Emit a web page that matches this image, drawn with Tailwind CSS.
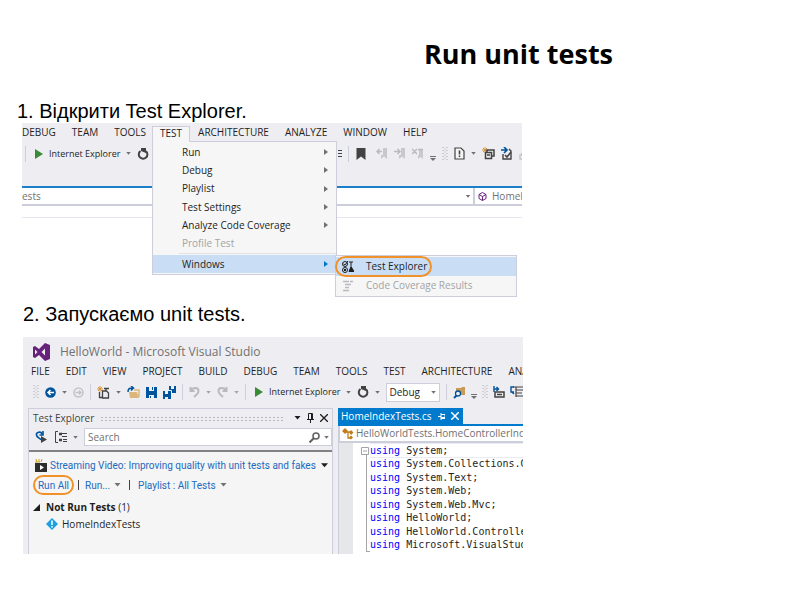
<!DOCTYPE html>
<html lang="uk">
<head>
    <meta charset="UTF-8">
    <meta name="viewport" content="width=device-width, initial-scale=1.0">
    <title>Run unit tests</title>
    <script src="https://cdn.jsdelivr.net/npm/@tailwindcss/browser@4"></script>
</head>
<body class="bg-white text-black font-['Liberation_Sans',sans-serif]">

    <!-- Shared icons -->
    <svg class="hidden">
        <symbol id="caret" viewBox="0 0 6 4"><path d="M0 0h6L3 3.5z" fill="currentColor"/></symbol>
        <symbol id="play" viewBox="0 0 8 10"><path d="M0 0l8 5-8 5z" fill="#388a34"/></symbol>
        <symbol id="arrow" viewBox="0 0 4 6"><path d="M0 0l4 3-4 3z" fill="currentColor"/></symbol>
        <symbol id="refresh" viewBox="0 0 12 12"><path d="M3.500 3A4.300 4.300 0 1 0 9 3.300" fill="none" stroke="#424242" stroke-width="2"/><path d="M4 0h5v5L4 3z" fill="#424242"/></symbol>
        <symbol id="grip" viewBox="0 0 6 14"><path d="M1 0v14M5 0v14" stroke="#a9a9b3" stroke-dasharray="1 2"/><path d="M3 1.5v12" stroke="#a9a9b3" stroke-dasharray="1 2"/></symbol>
        <symbol id="overflow" viewBox="0 0 6 14"><path d="M0 9.5h6" stroke="#717171"/><path d="M0 11h6l-3 3z" fill="#717171"/></symbol>
        <symbol id="undo" viewBox="0 0 11 12"><path d="M1.5 1v4h4M2 4.5C4 1 9.500 1 9.500 5c0 2.500-2 4-4.500 6" fill="none" stroke="#b9b9bf" stroke-width="2"/></symbol>
    </svg>

    <header class="pt-9 pl-[424px]">
        <h1 class="text-[27px] leading-9 font-bold whitespace-nowrap font-['Open_Sans',sans-serif]">Run unit tests</h1>
    </header>

    <main class="pt-7">
        <h2 class="pl-[17px] text-[20px] leading-[23px]">1. Відкрити Test Explorer.</h2>

        <!-- TEST menu opened -->
        <section class="relative ml-[22px] w-5/8 pb-[78px] text-[10px] text-[#1e1e1e] font-['Open_Sans',sans-serif]">
            <div class="overflow-hidden">
                <div class="bg-[#eeeef2] h-[63px]">
                    <nav class="flex h-[19px] items-center gap-4 whitespace-nowrap">
                        <button>DEBUG</button>
                        <button>TEAM</button>
                        <button>TOOLS</button>
                        <button class="relative z-10 -mr-2 -ml-[10px] flex h-4 items-center self-end border border-b-0 border-[#cccedb] bg-[#f6f6f6] px-[7px] pb-[2px]">TEST</button>
                        <button>ARCHITECTURE</button>
                        <button>ANALYZE</button>
                        <button>WINDOW</button>
                        <button>HELP</button>
                    </nav>
                    <div class="flex h-[23px] items-center whitespace-nowrap">
                        <div class="flex w-[316px] shrink-0 items-center gap-[6px] pl-[3px]">
                            <span class="h-4 w-px bg-[#cccedb]"></span>
                            <button class="flex items-center gap-[6px] pl-[3px] text-[9px]">
                                <svg class="w-[8px] h-[10px]"><use href="#play"/></svg>
                                Internet Explorer
                            </button>
                            <svg class="w-[5px] h-[3px] text-[#717171]"><use href="#caret"/></svg>
                            <svg class="size-3"><use href="#refresh"/></svg>
                        </div>
                        <div class="flex shrink-0 items-center gap-[6px]">
                            <svg class="w-1 h-[10px]"><path d="M0 1.500h4M0 4.500h4M0 7.500h4" stroke="#424242"/></svg>
                            <span class="h-4 w-px bg-[#cccedb]"></span>
                            <svg class="ml-px w-[10px] h-[12px]"><path d="M0.500 0h9v12L5 8.500 0.500 12z" fill="#424242"/></svg>
                            <svg class="ml-1 size-3"><path d="M7 0h4v11L8 8.500 5 11V7h2z" fill="#c8c8ce"/><path d="M6 3.500H1M3.500 1L1 3.500 3.500 6" fill="none" stroke="#b9b9bf" stroke-width="1.500"/></svg>
                            <svg class="size-3"><path d="M7 0h4v11L8 8.500 5 11V7h2z" fill="#c8c8ce"/><path d="M0 3.500h6M3.500 1L6 3.500 3.500 6" fill="none" stroke="#b9b9bf" stroke-width="1.500"/></svg>
                            <svg class="size-3"><path d="M7 2h4v9L8.500 9 6 11V7h1z" fill="#c8c8ce"/><path d="M0 1l5 5M5 1L0 6M6 1.500h5" fill="none" stroke="#b9b9bf" stroke-width="1.500"/></svg>
                            <svg class="w-[6px] h-[14px]"><use href="#overflow"/></svg>
                            <svg class="w-[6px] h-[14px]"><use href="#grip"/></svg>
                            <svg class="w-[11px] h-[13px]"><path d="M1 1h6l3 3v8H1z" fill="#f6f6f6" stroke="#424242" stroke-width="1.200"/><path d="M5.500 3.500v4M5.500 8.500v1.500" stroke="#424242" stroke-width="1.600"/></svg>
                            <svg class="w-[5px] h-[3px] text-[#717171]"><use href="#caret"/></svg>
                            <svg class="w-[13px] h-[13px]"><path d="M3 0v6M0 3h6M1 1l4 4M5 1L1 5" stroke="#d8963a"/><path d="M5 5V3h7v6h-2M3.500 5.500h6v6h-6zM5 8h3" fill="none" stroke="#424242" stroke-width="1.500"/></svg>
                            <svg class="w-[12px] h-[13px]"><path d="M2 7v5h8V4L8 2" fill="none" stroke="#424242" stroke-width="1.400"/><path d="M4 8l2 2 4-5" fill="none" stroke="#424242" stroke-width="1.600"/><path d="M0 3h5M3 0l3 3-3 3" fill="none" stroke="#00539c" stroke-width="1.700"/></svg>
                            <svg class="w-[12px] h-[13px]"><path d="M6 1v3h5M6 4L2 7M1 8h4v4H1zM7 8h4v4H7z" fill="none" stroke="#c3c3c9" stroke-width="1.400"/></svg>
                        </div>
                    </div>
                </div>
                <div class="flex h-5 items-center border-t-2 border-b-2 border-t-[#1c7fc9] border-b-[#cccedb] text-[#717171]">
                    <span class="w-[443px] shrink-0">ests</span>
                    <svg class="w-[6px] h-[3px] shrink-0"><use href="#caret"/></svg>
                    <span class="ml-[2px] h-4 w-[2px] shrink-0 bg-[#cccedb]"></span>
                    <svg class="mx-[3px] size-[9px] shrink-0" fill="none" stroke="#68217a"><path d="M4.500 .5l3.500 2v4l-3.500 2-3.500-2v-4zM1 2.500l3.500 2 3.500-2M4.500 4.500v4"/></svg>
                    <span class="ml-[2px]">HomeI</span>
                </div>
                <div class="h-3 border-b border-[#e6e7ee]"></div>
            </div>

            <!-- Drop-down menu -->
            <div class="absolute left-[130px] top-[18px] w-[185px] border border-[#cccedb] bg-[#f6f6f6] pt-px pb-px">
                <div class="grid h-[110px] auto-rows-fr pl-[29px] pr-2">
                    <button class="flex items-center justify-between">Run<svg class="w-1 h-[6px] text-[#717171]"><use href="#arrow"/></svg></button>
                    <button class="flex items-center justify-between">Debug<svg class="w-1 h-[6px] text-[#717171]"><use href="#arrow"/></svg></button>
                    <button class="flex items-center justify-between">Playlist<svg class="w-1 h-[6px] text-[#717171]"><use href="#arrow"/></svg></button>
                    <button class="flex items-center justify-between">Test Settings<svg class="w-1 h-[6px] text-[#717171]"><use href="#arrow"/></svg></button>
                    <button class="flex items-center justify-between">Analyze Code Coverage<svg class="w-1 h-[6px] text-[#717171]"><use href="#arrow"/></svg></button>
                    <button class="flex items-center text-[#a2a4a5]" disabled>Profile Test</button>
                </div>
                <div class="ml-[26px] border-t border-[#e0e3e6]"></div>
                <button class="mt-px flex h-[18px] w-full items-center justify-between bg-[#c9def5] pl-[29px] pr-2">Windows<svg class="w-1 h-[6px] text-[#007acc]"><use href="#arrow"/></svg></button>
            </div>
            <div class="absolute left-[313px] top-[132px] w-[182px] border border-[#cccedb] bg-[#f6f6f6] py-px">
                <button class="flex h-[19px] w-full items-center gap-3 bg-[#c9def5] pl-[6px]">
                    <svg class="w-3 h-3" fill="none" stroke="#1e1e1e"><circle cx="3" cy="3" r="2.500"/><circle cx="3" cy="9" r="2.500"/><path d="M1.500 3l1.500 1 3-4M2 8l2 2M4 8l-2 2M7 1h4M9 1v4"/><path d="M7 10.500l2-5 3 5z" fill="#1e1e1e"/></svg>
                    Test Explorer
                </button>
                <button class="flex h-[19px] w-full items-center gap-3 pl-[6px] text-[#a2a4a5]" disabled>
                    <svg class="w-3 h-3" fill="none" stroke="#b9b9bf" stroke-width="1.500"><path d="M1 1.500h6M8 1.500h3M3 4.500h6M3 7.500h4M1 10.500h6"/></svg>
                    Code Coverage Results
                </button>
                <span class="absolute -left-px top-0 h-[21px] w-[97px] rounded-full border-2 border-[#f0912a]"></span>
            </div>
        </section>

        <h2 class="pt-[7px] pl-[23px] text-[20px] leading-[23px]">2. Запускаємо unit tests.</h2>

        <!-- Test Explorer window -->
        <section class="mt-[11px] ml-[23px] w-5/8 overflow-hidden bg-[#eeeef2] text-[10px] text-[#1e1e1e] font-['Open_Sans',sans-serif]">
            <div class="flex h-[26px] items-center gap-[10px] pt-1 pl-[10px] text-[12px] text-[#717171]">
                <svg class="w-[17px] h-[18px]" viewBox="0 0 17 18"><path fill="#68217a" fill-rule="evenodd" d="M12 0l5 2v14l-5 2-6-6-4 3-2-1V4l2-1 4 3zM12 5.500L8.500 9l3.500 3.500zM2 6.500v5L4.500 9z"/></svg>
                <span>HelloWorld - Microsoft Visual Studio</span>
            </div>
            <nav class="flex h-[17px] items-center gap-4 whitespace-nowrap pl-2">
                <button>FILE</button>
                <button>EDIT</button>
                <button>VIEW</button>
                <button>PROJECT</button>
                <button>BUILD</button>
                <button>DEBUG</button>
                <button>TEAM</button>
                <button>TOOLS</button>
                <button>TEST</button>
                <button>ARCHITECTURE</button>
                <button>ANA</button>
            </nav>
            <div class="flex h-[24px] items-center gap-[6px] whitespace-nowrap pl-[10px] *:shrink-0">
                <svg class="w-[6px] h-[14px]"><use href="#grip"/></svg>
                <svg class="w-[11px] h-[11px]"><circle cx="5.500" cy="5.500" r="5.300" fill="#00539c"/><path d="M9 5.500H3M5.500 3L3 5.500 5.500 8" fill="none" stroke="#fff" stroke-width="1.500"/></svg>
                <svg class="w-[5px] h-[3px] text-[#717171]"><use href="#caret"/></svg>
                <svg class="w-[11px] h-[11px]" fill="none" stroke="#c3c3c9" stroke-width="1.500"><circle cx="5.500" cy="5.500" r="4.500"/><path d="M2.500 5.500H8M6 3.500l2 2-2 2"/></svg>
                <span class="h-4 w-px bg-[#cccedb]"></span>
                <svg class="w-[13px] h-[13px]"><path d="M3 0v6M0 3h6M1 1l4 4M5 1L1 5" stroke="#d8963a"/><path d="M7 2.500h5M2.500 6v5.500H5M5.500 5h4l2 2v5h-6zM9 3v2" fill="none" stroke="#424242" stroke-width="1.300"/></svg>
                <svg class="w-[5px] h-[3px] text-[#717171]"><use href="#caret"/></svg>
                <svg class="w-[13px] h-[13px]"><path d="M2 6h8l2 6H3z" fill="#dcb67a"/><path d="M7 4h5v7" fill="none" stroke="#dcb67a" stroke-width="1.500"/><path d="M1 6c0-4 2-4 5-4M4 0l2.500 2L4 4.500" fill="none" stroke="#00539c" stroke-width="1.500"/></svg>
                <svg class="w-[11px] h-[11px]"><path d="M0 0h11v11H0z" fill="#00539c"/><path d="M3 0h5v4H3zM3 8h5v3H3z" fill="#eeeef2"/><path d="M6 0h1v3H6zM4 9h1v2H4z" fill="#00539c"/></svg>
                <svg class="w-[13px] h-[13px]"><path d="M6 0h7v7H6zM0 5h8v8H0z" fill="#00539c"/><path d="M8 0h3v3H8zM2 5h3v3H2zM2 11h3v2H2z" fill="#eeeef2"/><path d="M5.500 4.500h3v4" fill="none" stroke="#eeeef2"/></svg>
                <span class="h-4 w-px bg-[#cccedb]"></span>
                <svg class="w-[11px] h-[12px]"><use href="#undo"/></svg>
                <svg class="w-[5px] h-[3px] text-[#a2a4a5]"><use href="#caret"/></svg>
                <svg class="w-[11px] h-[12px] -scale-x-100"><use href="#undo"/></svg>
                <svg class="w-[5px] h-[3px] text-[#a2a4a5]"><use href="#caret"/></svg>
                <span class="h-4 w-px bg-[#cccedb]"></span>
                <button class="flex items-center gap-[6px] pl-[3px] text-[9px]">
                    <svg class="w-[8px] h-[10px]"><use href="#play"/></svg>
                    Internet Explorer
                </button>
                <svg class="w-[5px] h-[3px] text-[#717171]"><use href="#caret"/></svg>
                <svg class="size-3"><use href="#refresh"/></svg>
                <svg class="w-[5px] h-[3px] text-[#717171]"><use href="#caret"/></svg>
                <div class="relative flex items-center">
                    <select aria-label="Configuration" class="h-[19px] w-[54px] appearance-none border border-[#cccedb] bg-white pl-[2px]"><option>Debug</option></select>
                    <svg class="pointer-events-none absolute right-1 w-[5px] h-[3px] text-[#717171]"><use href="#caret"/></svg>
                </div>
                <span class="h-4 w-px bg-[#cccedb]"></span>
                <div class="flex items-center gap-[5px] *:shrink-0">
                    <svg class="w-[13px] h-[13px]"><path d="M3 2h5l1-1h3v8H3z" fill="#c99a55"/><circle cx="5" cy="7.500" r="2.500" fill="#eeeef2" stroke="#00539c" stroke-width="1.300"/><path d="M3.500 9.500L1 12" stroke="#00539c" stroke-width="2"/></svg>
                    <svg class="w-[6px] h-[14px]"><use href="#overflow"/></svg>
                    <svg class="w-[6px] h-[14px]"><use href="#grip"/></svg>
                    <svg class="w-[12px] h-[12px]"><path d="M1 0v6M1 3h4M3.500 1l2 2-2 2" fill="none" stroke="#00539c" stroke-width="1.400"/><path d="M2 6h9v5H2zM4 8.500h5" fill="none" stroke="#424242" stroke-width="1.500"/></svg>
                    <svg class="w-[13px] h-[12px]" fill="none"><path d="M4 1H1v5h3M2 6l2 2" stroke="#00539c" stroke-width="1.400"/><path d="M3 1h10M6 4h7M6 7h6M6 10h7M6 1v10" stroke="#424242" stroke-width="1.200"/></svg>
                </div>
            </div>

            <div class="flex pt-1">
                <!-- Test Explorer panel -->
                <div class="ml-[5px] w-[305px] shrink-0 border border-b-0 border-[#cccedb]">
                    <div class="flex h-[18px] items-center gap-[6px] pl-1 pr-1 text-[#444]">
                        <span class="whitespace-nowrap">Test Explorer</span>
                        <span class="h-[5px] flex-1 bg-[radial-gradient(#b9b9c2_1px,transparent_1px)] bg-size-[4px_3px]"></span>
                        <svg class="ml-1 w-[7px] h-[4px] text-[#1e1e1e]"><use href="#caret"/></svg>
                        <svg class="w-[7px] h-[10px]" fill="none" stroke="#1e1e1e"><path d="M1.500 6V.5h4V6M0 6.500h7M3.500 6.500V10M4.500 1v5"/></svg>
                        <svg class="w-[8px] h-[8px]"><path d="M0 0l8 8M8 0L0 8" stroke="#1e1e1e" stroke-width="1.300"/></svg>
                    </div>
                    <div class="flex h-[23px] items-start gap-[6px] pl-[6px] pt-px">
                        <div class="flex h-[18px] items-center gap-[6px]">
                            <svg class="w-[12px] h-[12px]"><path d="M7 3C6 0 1 1 1.500 4S5 7 6 9M8 0v4H4.500" fill="none" stroke="#00539c" stroke-width="1.600"/><path d="M6 5l6 3.500L6 12z" fill="#424242"/></svg>
                            <svg class="ml-[2px] w-[12px] h-[12px]" fill="none" stroke="#424242"><path d="M3 .5H.5v11H3M7 2.500h5M7 5.500h5M8 10.500h4M8 8.500h4"/><path d="M4 3h3M4 9h3" stroke-width="2.500"/></svg>
                            <svg class="w-[5px] h-[3px] text-[#717171]"><use href="#caret"/></svg>
                        </div>
                        <div class="relative flex flex-1 items-center">
                            <input type="search" aria-label="Search" placeholder="Search" class="h-[18px] w-full border border-[#cccedb] bg-white pl-[3px] placeholder:text-[#717171]">
                            <svg class="absolute right-3 w-[11px] h-[11px]" fill="none" stroke="#616161"><circle cx="7" cy="4" r="3" stroke-width="1.500"/><path d="M5 6L.5 10.500" stroke-width="2"/></svg>
                            <svg class="absolute right-[3px] w-[5px] h-[3px] text-[#717171]"><use href="#caret"/></svg>
                        </div>
                    </div>
                    <div class="h-[104px] border-t-2 border-[#828282] bg-[#f5f5f5]">
                        <div class="flex h-6 items-center gap-[3px] pt-[2px] pl-[6px] whitespace-nowrap font-['Roboto',sans-serif]">
                            <svg class="w-[12px] h-[13px]"><path d="M0 4h12v9H0z" fill="#2d2d2d"/><path d="M5 6v5l4-2.500z" fill="#fff"/><path d="M1 0l1 3M4 0v3M7 0L6 3M0 3h5" stroke="#c9a227"/></svg>
                            <a href="#" class="text-[#1b6ac0]">Streaming Video: Improving quality with unit tests and fakes</a>
                            <svg class="ml-[2px] w-[7px] h-[5px] text-[#1e1e1e]"><use href="#caret"/></svg>
                        </div>
                        <div class="flex h-[18px] items-center gap-[4px] pl-1 text-[#1b6ac0] font-['Roboto',sans-serif]">
                            <a href="#" class="-my-px flex h-5 w-[41px] items-center justify-center rounded-full border-2 border-[#f0912a]">Run All</a>
                            <span class="h-[10px] w-px bg-[#424242]"></span>
                            <a href="#" class="ml-[2px]">Run...</a>
                            <svg class="w-[7px] h-[4px] text-[#717171]"><use href="#caret"/></svg>
                            <span class="mx-1 h-[10px] w-px bg-[#424242]"></span>
                            <a href="#">Playlist : All Tests</a>
                            <svg class="w-[7px] h-[4px] text-[#717171]"><use href="#caret"/></svg>
                        </div>
                        <div class="flex h-[26px] items-center gap-[6px] pl-1 pt-px">
                            <svg class="w-[7px] h-[7px]"><path d="M7 0v7H0z" fill="#1e1e1e"/></svg>
                            <span><b>Not Run Tests</b> (1)</span>
                        </div>
                        <div class="flex h-2 items-center gap-1 pl-[17px]">
                            <svg class="size-[12px]"><path d="M6 0l6 6-6 6-6-6z" fill="#1ba1e2"/><path d="M6 2.500v4.500M6 8v1.500" stroke="#fff" stroke-width="1.500"/></svg>
                            <span>HomeIndexTests</span>
                        </div>
                    </div>
                </div>

                <!-- Code editor -->
                <div class="ml-[5px] flex min-w-0 flex-1 flex-col">
                    <div class="flex border-b-2 border-[#007acc]">
                        <button class="flex h-4 items-center gap-[6px] whitespace-nowrap bg-[#007acc] pl-[3px] pr-1 text-white">
                            HomeIndexTests.cs
                            <svg class="w-[7px] h-[7px]" fill="none" stroke="#fff"><path d="M0 3.500h3M3 0v7M3 1.500h4v4H3M3 4.500h4"/></svg>
                            <svg class="w-[8px] h-[8px]"><path d="M0 0l8 8M8 0L0 8" stroke="#fff" stroke-width="1.500"/></svg>
                        </button>
                    </div>
                    <div class="flex h-[17px] items-center gap-[2px] border-b-2 border-l-2 border-[#cccedb] bg-white pl-[2px] text-[#717171]">
                        <svg class="w-[12px] h-[12px] shrink-0"><path d="M0 3l3-3 3 3-3 3z" fill="#c27d1a"/><path d="M4 4h6M6 4v6h3" fill="none" stroke="#c27d1a" stroke-width="1.300"/><path d="M9 2l2.500 2.500L9 7 7 4.500zM9 7.500l2 2-2 2-2-2z" fill="#c27d1a"/></svg>
                        <span>HelloWorldTests.HomeControllerInde</span>
                    </div>
                    <div class="flex min-w-0 flex-1 border-l border-[#cccedb] bg-white">
                        <div class="w-[14px] shrink-0 bg-[#e6e7e8]"></div>
                        <div class="ml-2 flex w-[9px] shrink-0 flex-col pt-1">
                            <svg class="size-[8px]"><path d="M.5.5h7v7h-7zM2 4h4" fill="none" stroke="#a5a5a5"/></svg>
                            <span class="ml-[5px] mb-[2px] flex-1 border-l border-b border-[#a5a5a5]"></span>
                        </div>
                        <pre class="flex min-w-0 flex-1 flex-col justify-between pt-px pb-[3px] text-[10px] leading-[13px]"><code class="-my-px border-y border-[#eaeaf2] font-['DejaVu_Sans_Mono',monospace]"><span class="text-[#0000ff]">using</span> System;</code><code class="font-['DejaVu_Sans_Mono',monospace]"><span class="text-[#0000ff]">using</span> System.Collections.G</code><code class="font-['DejaVu_Sans_Mono',monospace]"><span class="text-[#0000ff]">using</span> System.Text;</code><code class="font-['DejaVu_Sans_Mono',monospace]"><span class="text-[#0000ff]">using</span> System.Web;</code><code class="font-['DejaVu_Sans_Mono',monospace]"><span class="text-[#0000ff]">using</span> System.Web.Mvc;</code><code class="font-['DejaVu_Sans_Mono',monospace]"><span class="text-[#0000ff]">using</span> HelloWorld;</code><code class="font-['DejaVu_Sans_Mono',monospace]"><span class="text-[#0000ff]">using</span> HelloWorld.Controlle</code><code class="font-['DejaVu_Sans_Mono',monospace]"><span class="text-[#0000ff]">using</span> Microsoft.VisualStud</code></pre>
                    </div>
                </div>
            </div>
        </section>
    </main>

</body>
</html>
